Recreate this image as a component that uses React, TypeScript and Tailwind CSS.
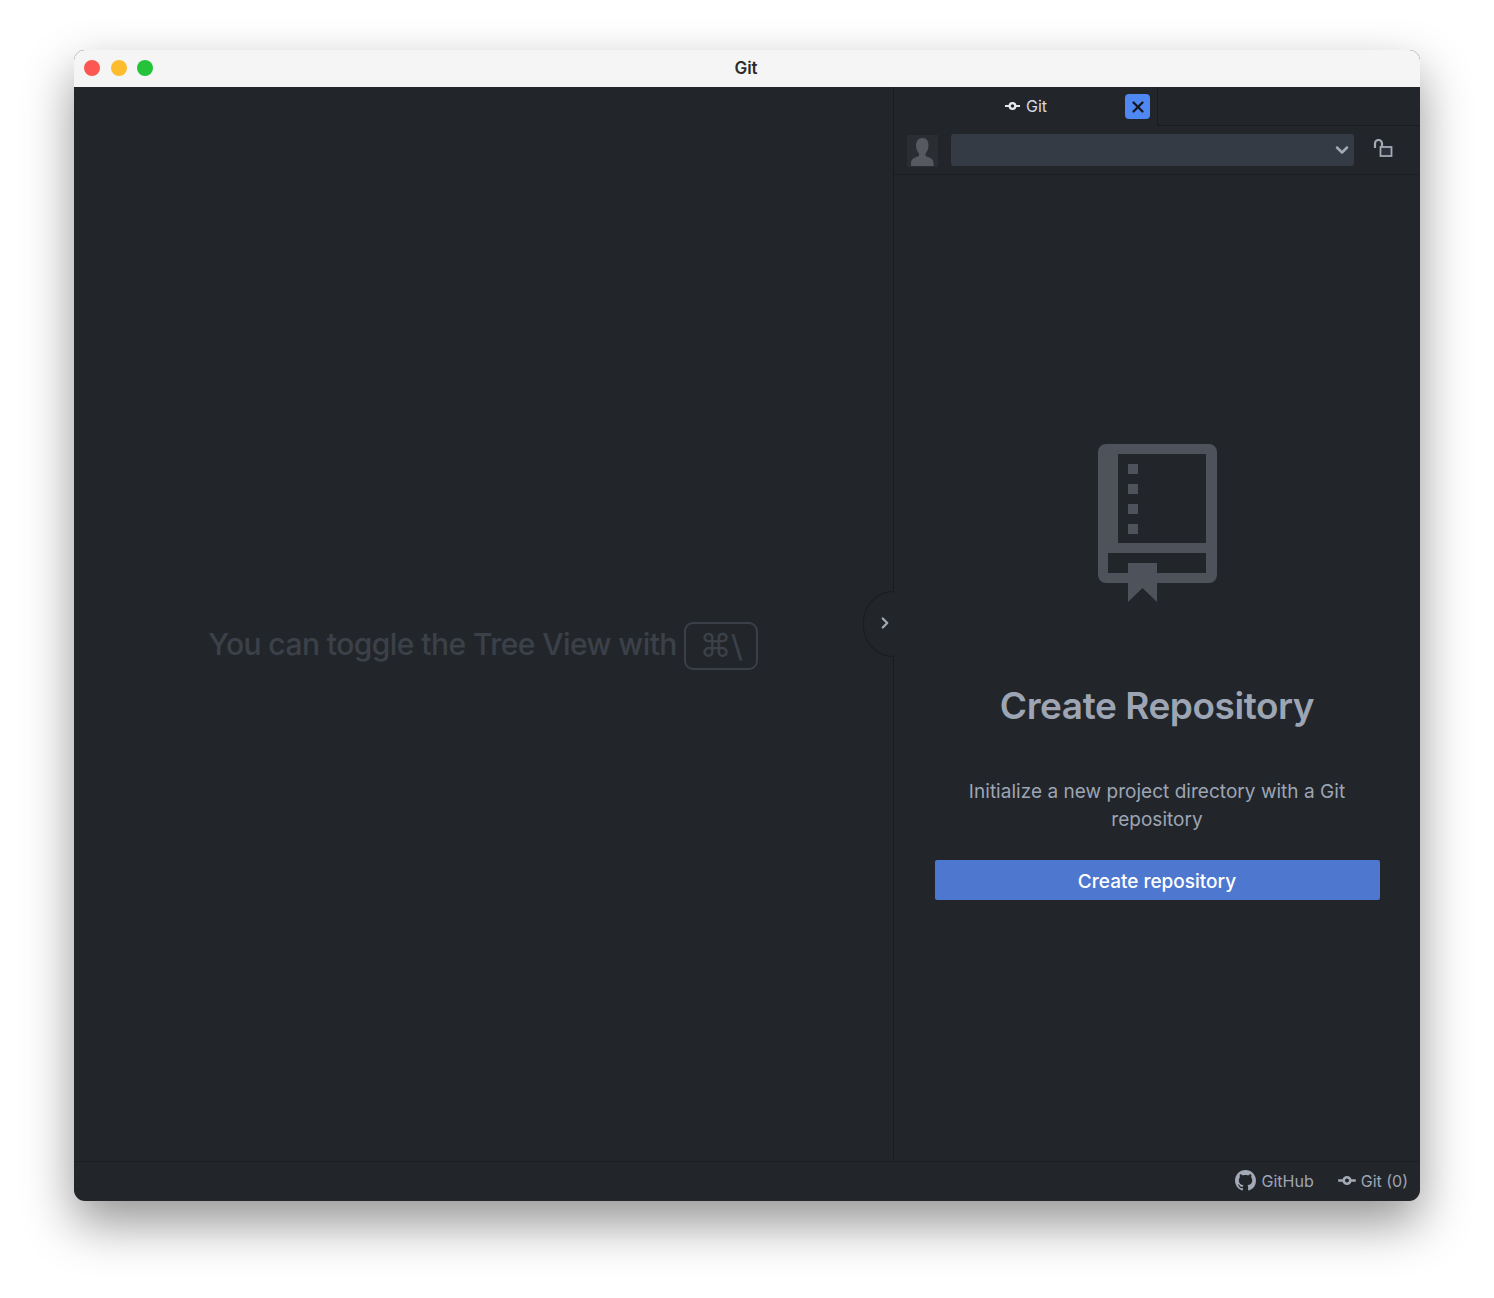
import { ChevronDown, ChevronRight, X } from "lucide-react";

function CommitIcon({ className }: { className?: string }) {
  return (
    <svg viewBox="0 0 16 10" className={className} fill="none" stroke="currentColor">
      <circle cx="8" cy="5" r="3" strokeWidth="2.400" />
      <path d="M0 5h4.500M11.500 5H16" strokeWidth="2.200" />
    </svg>
  );
}

function GithubIcon({ className }: { className?: string }) {
  return (
    <svg viewBox="0 0 16 16" className={className} fill="currentColor">
      <path d="M8 0C3.58 0 0 3.58 0 8c0 3.54 2.29 6.53 5.47 7.59.4.07.55-.17.55-.38 0-.19-.01-.82-.01-1.49-2.01.37-2.53-.49-2.69-.94-.09-.23-.48-.94-.82-1.13-.28-.15-.68-.52-.01-.53.63-.01 1.08.58 1.23.82.72 1.21 1.87.87 2.33.66.07-.52.28-.87.51-1.07-1.78-.2-3.64-.89-3.64-3.95 0-.87.31-1.59.82-2.15-.08-.2-.36-1.02.08-2.12 0 0 .67-.21 2.2.82.64-.18 1.32-.27 2-.27.68 0 1.36.09 2 .27 1.53-1.04 2.2-.82 2.2-.82.44 1.1.16 1.92.08 2.12.51.56.82 1.27.82 2.15 0 3.07-1.87 3.75-3.65 3.95.29.25.54.73.54 1.48 0 1.07-.01 1.93-.01 2.2 0 .21.15.46.55.38A8.013 8.013 0 0016 8c0-4.42-3.58-8-8-8z" />
    </svg>
  );
}

function RepoIcon() {
  return (
    <svg viewBox="0 0 119 159" className="w-[119px] h-[159px] text-[#4d525b]" fill="currentColor">
      <path
        fillRule="evenodd"
        d="M8 0h103a8 8 0 0 1 8 8v123a8 8 0 0 1-8 8H59v-10h49v-20H10v20h20v10H8a8 8 0 0 1-8-8V8a8 8 0 0 1 8-8zM20 10v89h88V10z"
      />
      <path d="M30 20h10v10H30zM30 40h10v10H30zM30 60h10v10H30zM30 80h10v10H30z" />
      <path d="M30 119h29v39l-14.500-14L30 158z" />
    </svg>
  );
}

function LockIcon() {
  return (
    <svg viewBox="0 0 20 18" className="w-5 h-[18px] text-[#a3a9b5]" fill="none" stroke="currentColor" strokeWidth="2.200">
      <path d="M2 9V4.500a3.500 3.500 0 0 1 7 0V8" />
      <rect x="7.500" y="8" width="11" height="9" fill="#2c3038" strokeWidth="1.800" />
    </svg>
  );
}

function Avatar() {
  return (
    <div className="mt-[1px] w-[31px] h-8 bg-[#2a2e33] flex items-end justify-center overflow-hidden">
      <svg viewBox="0 0 31 32" className="w-[31px] h-8 text-[#565a60]" fill="currentColor">
        <path d="M15.500 3c4 0 6 3 6 7.500 0 3.500-1.500 6.500-3 8v2.500c3 1.500 8 2 8 7V31H4v-3c0-5 5-5.500 8-7v-2.500c-1.500-1.500-3-4.500-3-8C9 6 11.500 3 15.500 3z" />
      </svg>
    </div>
  );
}

export default function App() {
  return (
    <div className="w-[1494px] h-[1298px] bg-white pt-[50px] pl-[74px] font-['Inter',sans-serif] overflow-hidden">
      <div className="w-[1346px] h-[1151px] rounded-[11px] overflow-hidden flex flex-col bg-[#22262b] shadow-[0_22px_50px_rgba(0,0,0,0.42)]">
        {/* Title bar */}
        <div className="relative h-[37px] shrink-0 bg-[#f5f5f5] flex items-center justify-center">
          <div className="absolute left-[10px] top-[10px] flex gap-[10.500px]">
            <div className="w-4 h-4 rounded-full bg-[#fc5753]" />
            <div className="w-4 h-4 rounded-full bg-[#fdbc2e]" />
            <div className="w-4 h-4 rounded-full bg-[#25c33a]" />
          </div>
          <span className="text-[17px] font-semibold text-[#2c2c2c] -ml-[2px]">Git</span>
        </div>

        {/* Panes */}
        <div className="flex-1 flex min-h-0">
          <div className="relative w-[820px] shrink-0 border-r border-[#191c20] flex items-start justify-center pt-[535px] pr-[1px]">
            <div className="flex items-center gap-[7px]">
              <span className="mb-[4px] text-[30px] leading-[44px] font-medium tracking-[-0.56px] text-[#3c4149]">
                You can toggle the Tree View with
              </span>
              <span className="w-[74px] h-[48px] rounded-[9px] border-2 border-[#3b4048] flex items-center justify-center text-[32px] font-medium text-[#3c4149] font-['DejaVu_Sans',sans-serif]">
                ⌘\
              </span>
            </div>
            <div className="absolute left-[789px] top-[504px] w-[31px] h-[66px] rounded-l-full border border-r-0 border-[#191c20] bg-[#22262b] flex items-center justify-center">
              <ChevronRight className="w-[22px] h-[22px] ml-[12px] -mt-[2px] text-[#a3a9b5]" strokeWidth={3} />
            </div>
          </div>

          <div className="flex-1 flex flex-col min-w-0">
            {/* Tabs */}
            <div className="h-[39px] shrink-0 flex">
              <div className="relative w-[264px] border-r border-[#191c20] flex items-center pl-[111px] pb-[1px] text-white">
                <CommitIcon className="w-[15px] h-[10px] mr-[6px] text-[#e6e8ec]" />
                <span className="text-[16px] text-[#d7dae0]">Git</span>
                <div className="absolute left-[231px] top-[7px] w-[25px] h-[25px] rounded-[4px] bg-[#4f87f3] flex items-center justify-center">
                  <X className="w-[18px] h-[18px] text-[#14181e]" strokeWidth={3} />
                </div>
              </div>
              <div className="flex-1 border-b border-[#191c20]" />
            </div>

            {/* Toolbar */}
            <div className="h-[49px] shrink-0 flex items-center pl-[13px] border-b border-[#1b1e23]">
              <Avatar />
              <div className="ml-[13px] w-[403px] h-8 rounded-[3px] bg-[#353b45] flex items-center justify-end pr-[2px]">
                <ChevronDown className="w-5 h-5 text-[#a3a9b5]" strokeWidth={3} />
              </div>
              <div className="ml-[19px] -mt-[5px]">
                <LockIcon />
              </div>
            </div>

            {/* Create repository */}
            <div className="flex-1 flex flex-col items-center pt-[269px]">
              <RepoIcon />
              <h1 className="mt-[80px] text-[37px] leading-[46px] font-semibold tracking-[-0.45px] text-[#9da5b4]">
                Create Repository
              </h1>
              <p className="mt-[49px] w-[400px] text-center text-[19px] leading-[28px] tracking-[0.03px] text-[#9da5b4]">
                Initialize a new project directory with a Git repository
              </p>
              <button className="mt-[26px] w-[445px] h-[40px] pt-[4px] rounded-[2px] bg-[#4e78cf] text-white text-[19px] font-medium">
                Create repository
              </button>
            </div>
          </div>
        </div>

        {/* Status bar */}
        <div className="h-[40px] shrink-0 border-t border-[#1b1e23] flex items-center justify-end pr-[12px] pb-[2px] text-[16px] text-[#9da5b4]">
          <GithubIcon className="w-[21px] h-[21px] mr-[5px] text-[#a3a9b5]" />
          <span>GitHub</span>
          <CommitIcon className="w-[18px] h-[11px] ml-[24px] mr-[5px] text-[#a3a9b5]" />
          <span>Git (0)</span>
        </div>
      </div>
    </div>
  );
}
